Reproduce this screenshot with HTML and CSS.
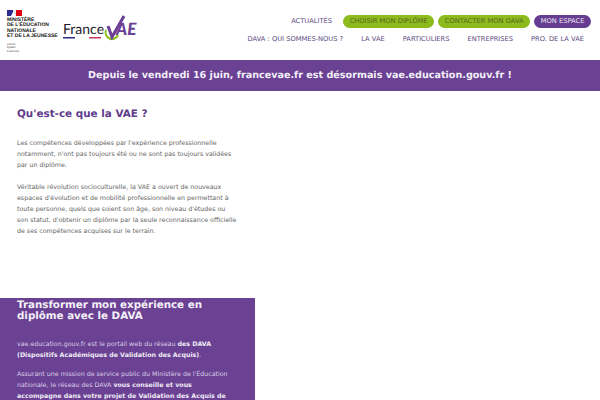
FILE: index.html
```html
<!DOCTYPE html>
<html lang="fr">
<head>
<meta charset="utf-8">
<title>France VAE</title>
<link rel="stylesheet" href="styles.css">
</head>
<body>
<header class="header">
  <div class="logos">
    <div class="ministry">
      <svg class="flag" width="15" height="6" viewBox="0 0 15 6"><rect width="6" height="6" fill="#2a2a8c"/><rect x="6" width="3" height="6" fill="#e8e8ee"/><rect x="9" width="6" height="6" fill="#e1000f"/><path d="M4 6 6 2 8 6z" fill="#fff"/></svg>
      <div class="ministry-name">MINISTÈRE<br>DE L'ÉDUCATION<br>NATIONALE<br>ET DE LA JEUNESSE</div>
      <div class="motto">Liberté<br>Égalité<br>Fraternité</div>
    </div>
    <div class="brand">
      <span class="brand-france">France</span>
      <svg class="brand-mark" width="40" height="28" viewBox="0 0 40 28">
        <path d="M3 15a6.500 6.500 0 1 0 12 5" fill="none" stroke="#8cbb1c" stroke-width="2"/>
        <path d="M5 11l4 11L21 1" fill="none" stroke="#6a3f94" stroke-width="3"/>
        <text x="13" y="20" class="brand-vae">AE</text>
      </svg>
      <svg class="brand-dash" width="58" height="2" viewBox="0 0 58 2"><rect x="1" width="12" height="1.500" fill="#2d2d86"/><rect x="27" width="12" height="1.500" fill="#d0345c"/></svg>
    </div>
  </div>
  <nav class="nav">
    <div class="nav-top">
      <a class="nav-link news">ACTUALITÉS</a>
      <a class="pill green">CHOISIR MON DIPLÔME</a>
      <a class="pill green">CONTACTER MON DAVA</a>
      <a class="pill purple">MON ESPACE</a>
    </div>
    <div class="nav-bottom">
      <a class="nav-link">DAVA : QUI SOMMES-NOUS ?</a>
      <a class="nav-link">LA VAE</a>
      <a class="nav-link">PARTICULIERS</a>
      <a class="nav-link">ENTREPRISES</a>
      <a class="nav-link">PRO. DE LA VAE</a>
    </div>
  </nav>
</header>
<div class="banner">Depuis le vendredi 16 juin, francevae.fr est désormais vae.education.gouv.fr !</div>
<main>
  <section class="intro">
    <h2>Qu'est-ce que la VAE ?</h2>
    <p>Les compétences développées par l'expérience professionnelle notamment, n'ont pas toujours été ou ne sont pas toujours validées par un diplôme.</p>
    <p>Véritable révolution socioculturelle, la VAE a ouvert de nouveaux espaces d'évolution et de mobilité professionnelle en permettant à toute personne, quels que soient son âge, son niveau d'études ou son statut, d'obtenir un diplôme par la seule reconnaissance officielle de ses compétences acquises sur le terrain.</p>
  </section>
  <section class="panel">
    <h2>Transformer mon expérience en diplôme avec le DAVA</h2>
    <p>vae.education.gouv.fr est le portail web du réseau <b>des DAVA (Dispositifs Académiques de Validation des Acquis)</b>.</p>
    <p>Assurant une mission de service public du Ministère de l'Éducation nationale, le réseau des DAVA <b>vous conseille et vous accompagne dans votre projet de Validation des Acquis de l'Expérience</b>.</p>
  </section>
</main>
</body>
</html>
```
FILE: styles.css
```css
html, body { margin: 0; height: 400px; overflow: hidden; background: #fff; }
body { font-family: "DejaVu Sans", sans-serif; color: #666; text-rendering: geometricPrecision; }
.header { height: 60px; display: flex; justify-content: space-between; box-sizing: border-box; }
.logos { display: flex; align-items: flex-start; padding: 10px 0 0 7px; }
.ministry { width: 54px; color: #111; }
.flag { display: block; margin-bottom: 2px; }
.ministry-name { font: 700 5px/5.400px "Liberation Sans", sans-serif; white-space: nowrap; }
.motto { font: 2.800px/3.500px "Liberation Sans", sans-serif; margin-top: 3px; color: #444; }
.brand { position: relative; width: 78px; height: 36px; margin-left: 1px; }
.brand-france { position: absolute; left: 1px; top: 10px; font: 400 14px/18px "Lato", sans-serif; color: #1c1c2e; }
.brand-mark { position: absolute; left: 41px; top: 5px; }
.brand-vae { font: italic 900 17px "Lato", sans-serif; fill: #6a3f94; }
.brand-dash { position: absolute; left: 0; top: 27px; }
.nav { display: flex; flex-direction: column; align-items: flex-end; padding: 15px 9px 0 0; }
.nav-top { display: flex; align-items: center; gap: 4px; height: 13px; }
.nav-bottom { display: flex; gap: 18px; margin-top: 7px; padding-right: 7px; }
.nav-link { font-size: 6.700px; line-height: 9px; color: #5a4780; white-space: nowrap; }
.news { margin-right: 7px; }
.pill { font-size: 6.700px; line-height: 13px; border-radius: 7px; padding: 0 6.600px; white-space: nowrap; }
.green { background: #8dbb1e; color: #55651f; }
.purple { background: #673d92; color: #eee8f3; }
.banner { background: #6b4194; color: #f3eff7; height: 31px; line-height: 31px; text-align: center; font-size: 9.600px; font-weight: 700; }
.intro { padding: 16px 0 0 17px; width: 221px; height: 191px; box-sizing: content-box; }
.intro h2 { margin: 0 0 16px; font-size: 10.400px; line-height: 15px; color: #5f3c8c; }
.intro p { margin: 0 0 11px; font-size: 6.300px; line-height: 11px; }
.panel { background: #6a4193; width: 238px; height: 100px; padding: 2px 0 0 17px; color: #d9cfe6; overflow: hidden; box-sizing: content-box; }
.panel h2 { margin: 0 0 17px; font-size: 10.300px; line-height: 11px; color: #f4f0f8; width: 200px; }
.panel p { margin: 0 0 8px; font-size: 6.300px; line-height: 11px; width: 220px; }
.panel b { color: #f0ebf5; }
```
